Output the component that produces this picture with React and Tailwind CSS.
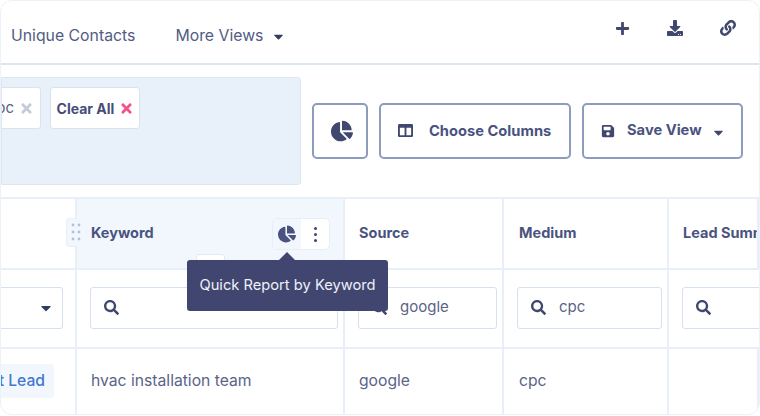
import React from 'react';
import { FaCaretDown, FaChartPie, FaColumns, FaDownload, FaLink, FaPlus, FaSave, FaSearch, FaTimes } from 'react-icons/fa';

const font = { fontFamily: 'Inter, "Noto Sans", sans-serif' };

function Grip() {
  return (
    <svg width="10" height="18" viewBox="0 0 10 18" className="fill-[#b4c2d8]">
      {[2, 8].map((x) =>
        [2, 9, 16].map((y) => <circle key={`${x}-${y}`} cx={x} cy={y} r="1.4" />)
      )}
    </svg>
  );
}

function SearchBox({ value, className }) {
  return (
    <div className={`h-[42px] flex items-center gap-[13px] px-[13px] bg-white border border-[#d5e1ef] rounded-[3px] ${className}`}>
      <FaSearch className="text-[15px] text-[#40486f] shrink-0" />
      <span className="text-[15px] text-[#5a6388]">{value}</span>
    </div>
  );
}

function HeaderCell({ label, className = '' }) {
  return (
    <div className={`h-[71px] pl-[14px] pt-[25px] border-r-2 border-b-2 border-[#e8eff8] text-[14.5px] leading-[18px] font-bold text-[#4a5380] whitespace-nowrap overflow-hidden ${className}`}>
      {label}
    </div>
  );
}

function FilterCell({ children }) {
  return (
    <div className="h-[79px] flex items-center pl-[13px] pr-[5px] pb-[2px] border-r-2 border-b-2 border-[#e8eff8] overflow-hidden">
      {children}
    </div>
  );
}

function DataCell({ children, className = '' }) {
  return (
    <div className={`flex items-center pl-[14px] pb-[2px] border-r-2 border-[#e8eff8] text-[15.7px] text-[#5a6388] whitespace-nowrap ${className}`}>
      {children}
    </div>
  );
}

export default function App() {
  return (
    <div style={font} className="w-[760px] h-[416px] bg-white overflow-hidden">
      <div className="relative w-[760px] h-[415px] border border-[#edf2f9] rounded-[12px] overflow-hidden flex flex-col">
        {/* tabs row */}
        <div className="h-[64px] shrink-0 flex items-center border-b-2 border-[#dbe6f2] text-[#525c84] text-[15.8px]">
          <span className="ml-[10px] mt-[7px]">Unique Contacts</span>
          <span className="ml-[40px] mt-[7px]">More Views</span>
          <FaCaretDown className="ml-[8px] mt-[9px] text-[15px] text-[#333b63]" />
          <div className="ml-auto mr-[23px] -mt-[8px] flex items-center gap-[37px] text-[#40486f]">
            <FaPlus className="text-[15px]" />
            <FaDownload className="text-[16px]" />
            <FaLink className="text-[16px]" />
          </div>
        </div>

        {/* toolbar */}
        <div className="h-[134px] shrink-0 flex items-center border-b-2 border-[#e8eff8]">
          <div className="w-[300px] h-[108px] shrink-0 bg-[#e8f0fa] border border-[#dde7f3] rounded-r-[3px] pt-[9px] pr-[160px] flex justify-end items-start gap-[9px] overflow-hidden">
            <div className="h-[42px] shrink-0 pl-[8px] pr-[6px] flex items-center gap-[5px] bg-white border border-[#d9e4f1] rounded-[3px] text-[15px] text-[#5a6388]">
              <span className="-ml-[20px]">cpc</span>
              <FaTimes className="text-[15px] text-[#c3cbd8]" />
            </div>
            <div className="w-[90px] h-[42px] shrink-0 flex items-center justify-center gap-[5px] pl-[1px] bg-white border border-[#d9e4f1] rounded-[3px] text-[14px] font-bold text-[#454d78]">
              Clear All
              <FaTimes className="text-[15px] text-[#f4518c]" />
            </div>
          </div>
          <div className="flex ml-[11px] gap-[11px] text-[#40486f]">
            <button className="w-[56px] h-[56px] flex items-center justify-center pl-[4px] border-2 border-[#8d9cbd] rounded-[5px]">
              <FaChartPie className="text-[22px]" />
            </button>
            <button className="w-[192px] h-[56px] flex items-center pl-[17px] border-2 border-[#8d9cbd] rounded-[5px] text-[14.7px] font-bold text-[#4a5380]">
              <FaColumns className="text-[15px] text-[#40486f] -mt-[2px]" />
              <span className="ml-[16px]">Choose Columns</span>
            </button>
            <button className="w-[161px] h-[56px] flex items-center pl-[17px] border-2 border-[#8d9cbd] rounded-[5px] text-[14.7px] font-bold text-[#4a5380]">
              <FaSave className="text-[14px] text-[#40486f] -mt-[1px]" />
              <span className="ml-[12px] -mt-[2px]">Save View</span>
              <FaCaretDown className="ml-[9px] mt-[3px] text-[15px] text-[#40486f]" />
            </button>
          </div>
        </div>

        {/* table */}
        <div className="flex-1 grid grid-cols-[76px_268px_159px_165px_1fr] grid-rows-[71px_79px_1fr]">
          <HeaderCell label="" />
          <div className="relative h-[71px] pl-[14px] pt-[25px] bg-[#f2f7fe] border-r-2 border-b-2 border-[#e8eff8] text-[14.5px] leading-[18px] font-bold text-[#4a5380]">
            Keyword
            <div className="absolute -left-[11px] top-[19px] w-[11px] h-[29px] bg-[#f2f7fe] border border-r-0 border-[#e8eff8] rounded-l-[4px]" />
            <div className="absolute -left-[6px] top-[24px] z-10 flex">
              <Grip />
            </div>
            <div className="absolute left-[195px] top-[19px] w-[58px] h-[32px] flex bg-white border border-[#e6eef8] rounded-[5px] overflow-hidden">
              <div className="w-[28px] flex items-center justify-center bg-[#f2f7fe]">
                <FaChartPie className="text-[18px] text-[#4a5380]" />
              </div>
              <div className="flex-1 flex flex-col items-center justify-center gap-[3px]">
                <span className="w-[3px] h-[3px] rounded-full bg-[#40486f]" />
                <span className="w-[3px] h-[3px] rounded-full bg-[#40486f]" />
                <span className="w-[3px] h-[3px] rounded-full bg-[#40486f]" />
              </div>
            </div>
            <div className="absolute left-[119px] top-[55px] w-[29px] h-[12px] bg-white border border-[#e0e9f4] rounded-t-[3px]" />
          </div>
          <HeaderCell label="Source" />
          <HeaderCell label="Medium" className="pl-[15px]" />
          <HeaderCell label="Lead Summary" className="border-r-0" />

          <div className="h-[79px] flex items-center justify-end pr-[12px] pb-[2px] border-r-2 border-b-2 border-[#e8eff8]">
            <div className="w-[70px] h-[42px] -ml-[10px] flex items-center justify-end pr-[8px] bg-white border border-[#d5e1ef] border-l-0 rounded-r-[3px]">
              <FaCaretDown className="text-[16px] text-[#333b63]" />
            </div>
          </div>
          <FilterCell><SearchBox value="" className="w-full" /></FilterCell>
          <FilterCell><SearchBox value="google" className="w-full" /></FilterCell>
          <FilterCell><SearchBox value="cpc" className="w-full" /></FilterCell>
          <div className="h-[79px] flex items-center pl-[13px] pb-[2px] border-b-2 border-[#e8eff8] overflow-hidden">
            <SearchBox value="" className="w-[120px] shrink-0" />
          </div>

          <div className="flex items-center justify-end pr-[21px] pb-[2px] border-r-2 border-[#e8eff8] overflow-hidden">
            <span className="h-[34px] px-[9px] shrink-0 flex items-center bg-[#f2f7fe] rounded-[3px] text-[15.7px] font-medium text-[#4279cf] whitespace-nowrap">
              Last Lead
            </span>
          </div>
          <DataCell>hvac installation team</DataCell>
          <DataCell>google</DataCell>
          <DataCell className="pl-[15px]">cpc</DataCell>
          <DataCell className="border-r-0" />
        </div>

        {/* tooltip */}
        <div className="absolute left-[186px] top-[259px] w-[201px] h-[51px] flex items-center justify-center bg-[#404670] rounded-[3px] text-[14.7px] text-[#eef1f8] whitespace-nowrap">
          <span className="absolute left-[92px] -top-[8px] w-0 h-0 border-x-[8px] border-x-transparent border-b-[8px] border-b-[#404670]" />
          Quick Report by Keyword
        </div>
      </div>
    </div>
  );
}
